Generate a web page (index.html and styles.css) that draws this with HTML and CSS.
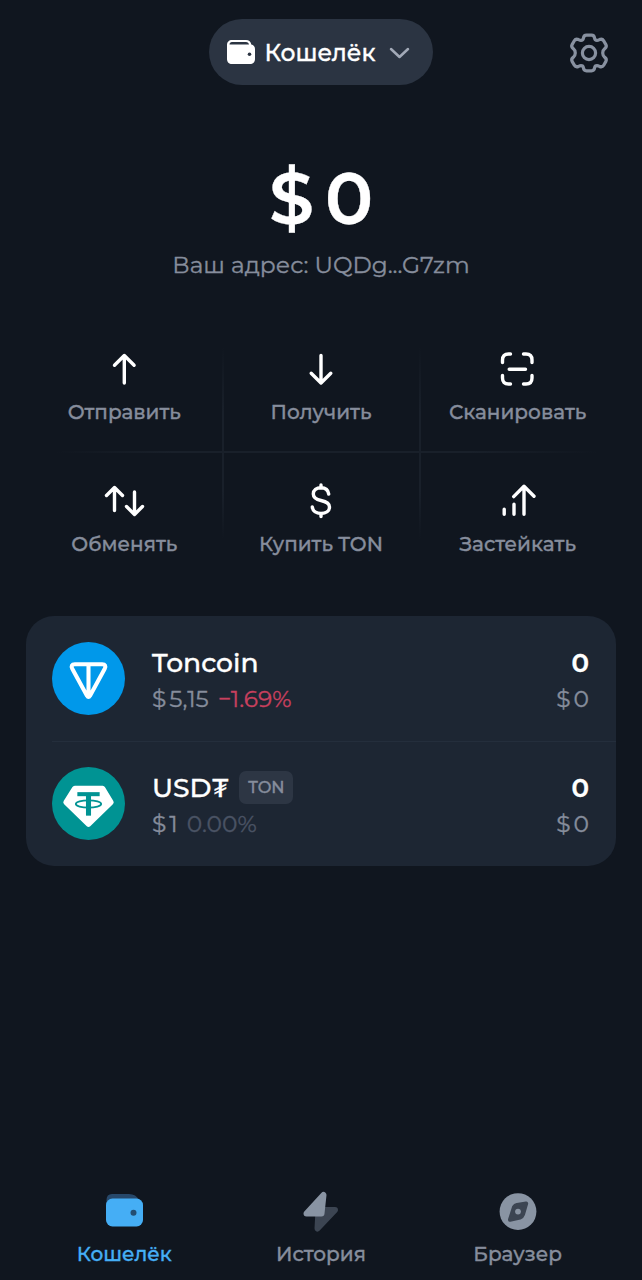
FILE: index.html
```html
<!DOCTYPE html>
<html lang="ru">
<head>
  <meta charset="UTF-8">
  <meta name="viewport" content="width=device-width, initial-scale=1.0">
  <title>Кошелёк</title>
  <link rel="stylesheet" href="styles.css">
</head>
<body>

  <!-- Header -->
  <header class="header">
    <button class="wallet-switch">
      <svg width="30" height="26" viewBox="0 0 30 26">
        <path fill="#fff" fill-rule="evenodd" d="M6 1H20C23 1 25 3 25.3 5.600C27.500 6 29 7.800 29 10V20C29 23 27 25 24 25H6C3 25 1 23 1 20V6C1 3 3 1 6 1ZM6 3C4.500 3 3.500 4 3.500 5.500H23C22.700 4 21.700 3 20 3Z"/>
        <circle cx="23.500" cy="15.300" r="1.800" fill="#2b3442"/>
      </svg>
      <span class="wallet-name">Кошелёк</span>
      <svg class="chevron" width="22" height="14" viewBox="0 0 22 14" fill="none" stroke="#a2a9b7" stroke-width="2.500" stroke-linecap="round" stroke-linejoin="round">
        <path d="M2 4L10.500 12L19 4"/>
      </svg>
    </button>
    <button class="settings">
      <svg width="42" height="42" viewBox="0 0 42 42" fill="none" stroke="#8891a0" stroke-width="3.200">
        <path stroke-linejoin="round" d="M15.400 6.200Q15.800 3.200 18.500 3.200H23.500Q26.200 3.200 26.600 6.200Q26.900 8.300 29 8.300Q30 8.300 31.500 7.600Q34.300 6.500 35.700 8.800L37.900 12.600Q39.100 14.900 36.800 16.600Q34.700 18.300 34.700 21Q34.700 23.700 36.800 25.400Q39.100 27.100 37.900 29.400L35.700 33.200Q34.300 35.500 31.500 34.400Q30 33.700 29 33.700Q26.900 33.700 26.600 35.800Q26.200 38.800 23.500 38.800H18.500Q15.800 38.800 15.400 35.800Q15.100 33.700 13 33.700Q12 33.700 10.500 34.400Q7.700 35.500 6.300 33.200L4.100 29.400Q2.900 27.100 5.200 25.400Q7.300 23.700 7.300 21Q7.300 18.300 5.200 16.600Q2.900 14.900 4.100 12.600L6.300 8.800Q7.700 6.500 10.500 7.600Q12 8.300 13 8.300Q15.100 8.300 15.400 6.200Z"/>
        <circle cx="21" cy="21" r="6.600"/>
      </svg>
    </button>
  </header>

  <!-- Balance -->
  <section class="balance">
    <div class="balance-amount"><span>$</span><span>0</span></div>
    <div class="balance-address">Ваш адрес: UQDg...G7zm</div>
  </section>

  <!-- Actions -->
  <section class="actions">
    <button class="action">
      <svg class="action-icon" viewBox="0 0 44 44">
        <path d="M22.300 36V8.500M12.500 18.300L22.300 8.500L32.100 18.300"/>
      </svg>
      <span>Отправить</span>
    </button>
    <button class="action">
      <svg class="action-icon" viewBox="0 0 44 44">
        <path d="M22 8.500V36M12.200 26.200L22 36L31.800 26.200"/>
      </svg>
      <span>Получить</span>
    </button>
    <button class="action">
      <svg class="action-icon" viewBox="0 0 44 44">
        <path d="M6.500 15.500V13Q6.500 7 12.500 7H14.500M27.500 7H30Q36 7 36 13V15.500M36 28.500V31Q36 37 30 37H27.500M14.500 37H12.500Q6.500 37 6.500 31V28.500M13.200 22.200H29.500"/>
      </svg>
      <span>Сканировать</span>
    </button>
    <button class="action">
      <svg class="action-icon" viewBox="0 0 44 44">
        <path d="M12.500 31.500V8.500M4.500 16.500L12.500 8.500L20.500 16.500M32.500 13V35.500M24.500 27.500L32.500 35.500L40.500 27.500"/>
      </svg>
      <span>Обменять</span>
    </button>
    <button class="action">
      <svg class="action-icon" viewBox="0 0 44 44">
        <path d="M22 6V9M22 34.500V37.500M29.700 15C29.200 11 26.500 8.700 22 8.700C17.500 8.700 14.300 11 14.300 15C14.300 19.200 17.500 20.500 22 21.500C27 22.600 30.500 24 30.500 28C30.500 32 27 34.500 22 34.500C17 34.500 13.700 32 13.300 28"/>
      </svg>
      <span>Купить TON</span>
    </button>
    <button class="action">
      <svg class="action-icon" viewBox="0 0 44 44">
        <path d="M8.200 30.300V35.300M18 25.300V35.300M28 35.300V7.300M17.700 17.600L28 7.300L38 17.300"/>
      </svg>
      <span>Застейкать</span>
    </button>
  </section>

  <!-- Tokens -->
  <section class="tokens">
    <div class="token">
      <svg class="token-icon" viewBox="0 0 72 72">
        <circle cx="36" cy="36" r="36" fill="#0098ea"/>
        <path fill="none" stroke="#fff" stroke-width="4" stroke-linejoin="round" d="M22.500 22H49.500Q54 22 52 26.300L37.500 53Q36 55.500 34.500 53L20 26.300Q18 22 22.500 22ZM36 22V53"/>
      </svg>
      <div class="token-info">
        <div class="token-name">Toncoin</div>
        <div class="token-rate"><span class="cur">$</span>5,15 <span class="diff down">−1.69%</span></div>
      </div>
      <div class="token-value">
        <div class="token-name">0</div>
        <div class="token-rate"><span class="cur">$</span>0</div>
      </div>
    </div>
    <div class="token">
      <svg class="token-icon" viewBox="0 0 72 72">
        <circle cx="36" cy="36" r="36" fill="#009393"/>
        <path fill="#fff" d="M22.500 18.500H50Q51.500 18.500 52.300 20L60.500 33.500Q61.500 35.200 60 36.700L37.700 58.500Q36 60 34.300 58.500L12 36.700Q10.500 35.200 11.500 33.500L20 20Q20.800 18.500 22.500 18.500Z"/>
        <g fill="none" stroke="#009393">
          <path stroke-width="4" d="M25 26.800H47"/>
          <path stroke-width="5" d="M36 27V48"/>
          <ellipse cx="36" cy="36.500" rx="12.500" ry="3.600" stroke-width="1.800"/>
        </g>
      </svg>
      <div class="token-info">
        <div class="token-name">USD₮<span class="tag">TON</span></div>
        <div class="token-rate"><span class="cur">$</span>1 <span class="diff flat">0.00%</span></div>
      </div>
      <div class="token-value">
        <div class="token-name">0</div>
        <div class="token-rate"><span class="cur">$</span>0</div>
      </div>
    </div>
  </section>

  <!-- Tab bar -->
  <nav class="tabs">
    <a class="tab active">
      <svg class="tab-icon" viewBox="0 0 44 44">
        <path fill="#27486a" d="M10 5H27Q34 5 37 11V14H4.500V11Q4.500 5 10 5Z"/>
        <rect x="4" y="9.500" width="37" height="28" rx="6.500" fill="#45aef5"/>
        <circle cx="31.500" cy="23.700" r="3" fill="#234e73"/>
      </svg>
      <span>Кошелёк</span>
    </a>
    <a class="tab">
      <svg class="tab-icon" viewBox="0 0 44 44" stroke-linejoin="round">
        <path fill="#3c4552" stroke="#3c4552" stroke-width="6" d="M19.500 21H36L18.500 39.500Z"/>
        <path fill="#8994a3" stroke="#8994a3" stroke-width="6" d="M24.500 6L22.500 24.500H7.500Z"/>
      </svg>
      <span>История</span>
    </a>
    <a class="tab">
      <svg class="tab-icon" viewBox="0 0 44 44">
        <circle cx="22" cy="22.600" r="18.400" fill="#8994a3"/>
        <path fill="#3c4552" stroke="#3c4552" stroke-width="4" stroke-linejoin="round" d="M18 18Q19 16.500 21 16L30.200 14.500L27 25.500Q26.300 27.700 24 28.500L14 30.700Z"/>
        <circle cx="22" cy="22.600" r="2.900" fill="#8994a3"/>
      </svg>
      <span>Браузер</span>
    </a>
  </nav>

</body>
</html>
```
FILE: styles.css
```css
* {
  box-sizing: border-box;
}
body {
  margin: 0;
  height: 1280px;
  display: flex;
  flex-direction: column;
  background-color: #10161f;
  color: #fff;
  font-family: Montserrat, Inter, "Noto Sans", sans-serif;
  font-weight: 500;
  -webkit-text-stroke: 0.35px;
}
button {
  padding: 0;
  border: 0;
  background: none;
  color: inherit;
  font: inherit;
}
svg {
  display: block;
}
.header {
  display: grid;
  grid-template-columns: 1fr 224px 1fr;
  align-items: center;
  height: 66px;
  margin-top: 19px;
  padding-right: 32px;
}
.header::before {
  content: "";
}
.wallet-switch {
  display: flex;
  align-items: center;
  width: 224px;
  height: 66px;
  margin-left: 16px;
  padding-left: 17px;
  border-radius: 33px;
  background-color: #2b3442;
}
.wallet-name {
  width: 112px;
  margin-left: 8px;
  padding-top: 1px;
  font-size: 23.4px;
  white-space: nowrap;
}
.chevron {
  margin-left: 13px;
}
.settings {
  justify-self: end;
  padding-top: 2px;
}
.balance {
  height: 235px;
  padding-top: 70px;
  text-align: center;
}
.balance-amount {
  display: flex;
  justify-content: center;
  gap: 11px;
  font-size: 71.5px;
  line-height: 88px;
  font-weight: 600;
}
.balance-address {
  margin-top: 6px;
  font-size: 23.3px;
  line-height: 31px;
  font-weight: 400;
  color: #868d9c;
}
.actions {
  display: grid;
  grid-template-columns: repeat(3, 1fr);
  grid-template-rows: 132px 132px;
  margin: 0 26px;
  background:
    linear-gradient(90deg, transparent 5%, #19202a 25%, #19202a 75%, transparent 97%) 0 131px / 100% 2px no-repeat,
    linear-gradient(transparent 10%, #19202a 35%, #19202a 65%, transparent 83%) 196px 0 / 2px 100% no-repeat,
    linear-gradient(transparent 10%, #19202a 35%, #19202a 65%, transparent 83%) 393px 0 / 2px 100% no-repeat;
}
.action {
  display: flex;
  flex-direction: column;
  align-items: center;
  padding-top: 27px;
  font-size: 20px;
  line-height: 26px;
  color: #868d9c;
}
.action-icon {
  width: 44px;
  height: 44px;
  margin-bottom: 8px;
  fill: none;
  stroke: #fff;
  stroke-width: 3.4;
  stroke-linecap: round;
  stroke-linejoin: round;
}
.tokens {
  margin: 32px 26px 0;
  border-radius: 28px;
  background-color: #1d2633;
}
.token {
  display: flex;
  height: 125px;
  padding: 26px 27px 0 26px;
}
.token + .token {
  background: linear-gradient(#242e3c, #242e3c) 26px 0 / 100% 1px no-repeat;
}
.token-icon {
  width: 73px;
  height: 73px;
}
.token-info {
  flex: 1;
  margin-left: 27px;
}
.token-name {
  display: flex;
  align-items: center;
  height: 40px;
  padding-top: 1px;
  font-size: 26.6px;
}
.token-rate {
  display: flex;
  height: 32px;
  font-size: 23.3px;
  line-height: 34px;
  font-weight: 400;
  color: #868d9c;
}
.cur {
  margin-right: 3px;
}
.diff {
  margin-left: 9px;
}
.down {
  color: #c8405e;
}
.flat {
  color: #4a5364;
}
.tag {
  width: 54px;
  height: 33px;
  margin-left: 10px;
  border-radius: 7px;
  background-color: #2d3644;
  color: #868d9c;
  font-size: 16.3px;
  line-height: 33px;
  text-align: center;
}
.token-value {
  display: flex;
  flex-direction: column;
  align-items: flex-end;
}
.token-value .token-name {
  font-size: 26px;
  font-weight: 600;
}
.tabs {
  display: grid;
  grid-template-columns: repeat(3, 1fr);
  height: 91px;
  margin: auto 26px 0;
}
.tab {
  display: flex;
  flex-direction: column;
  align-items: center;
  font-size: 20px;
  line-height: 26px;
  color: #868d9c;
}
.tab-icon {
  width: 44px;
  height: 44px;
  margin-bottom: 8px;
}
.active {
  color: #45aef5;
}
```
